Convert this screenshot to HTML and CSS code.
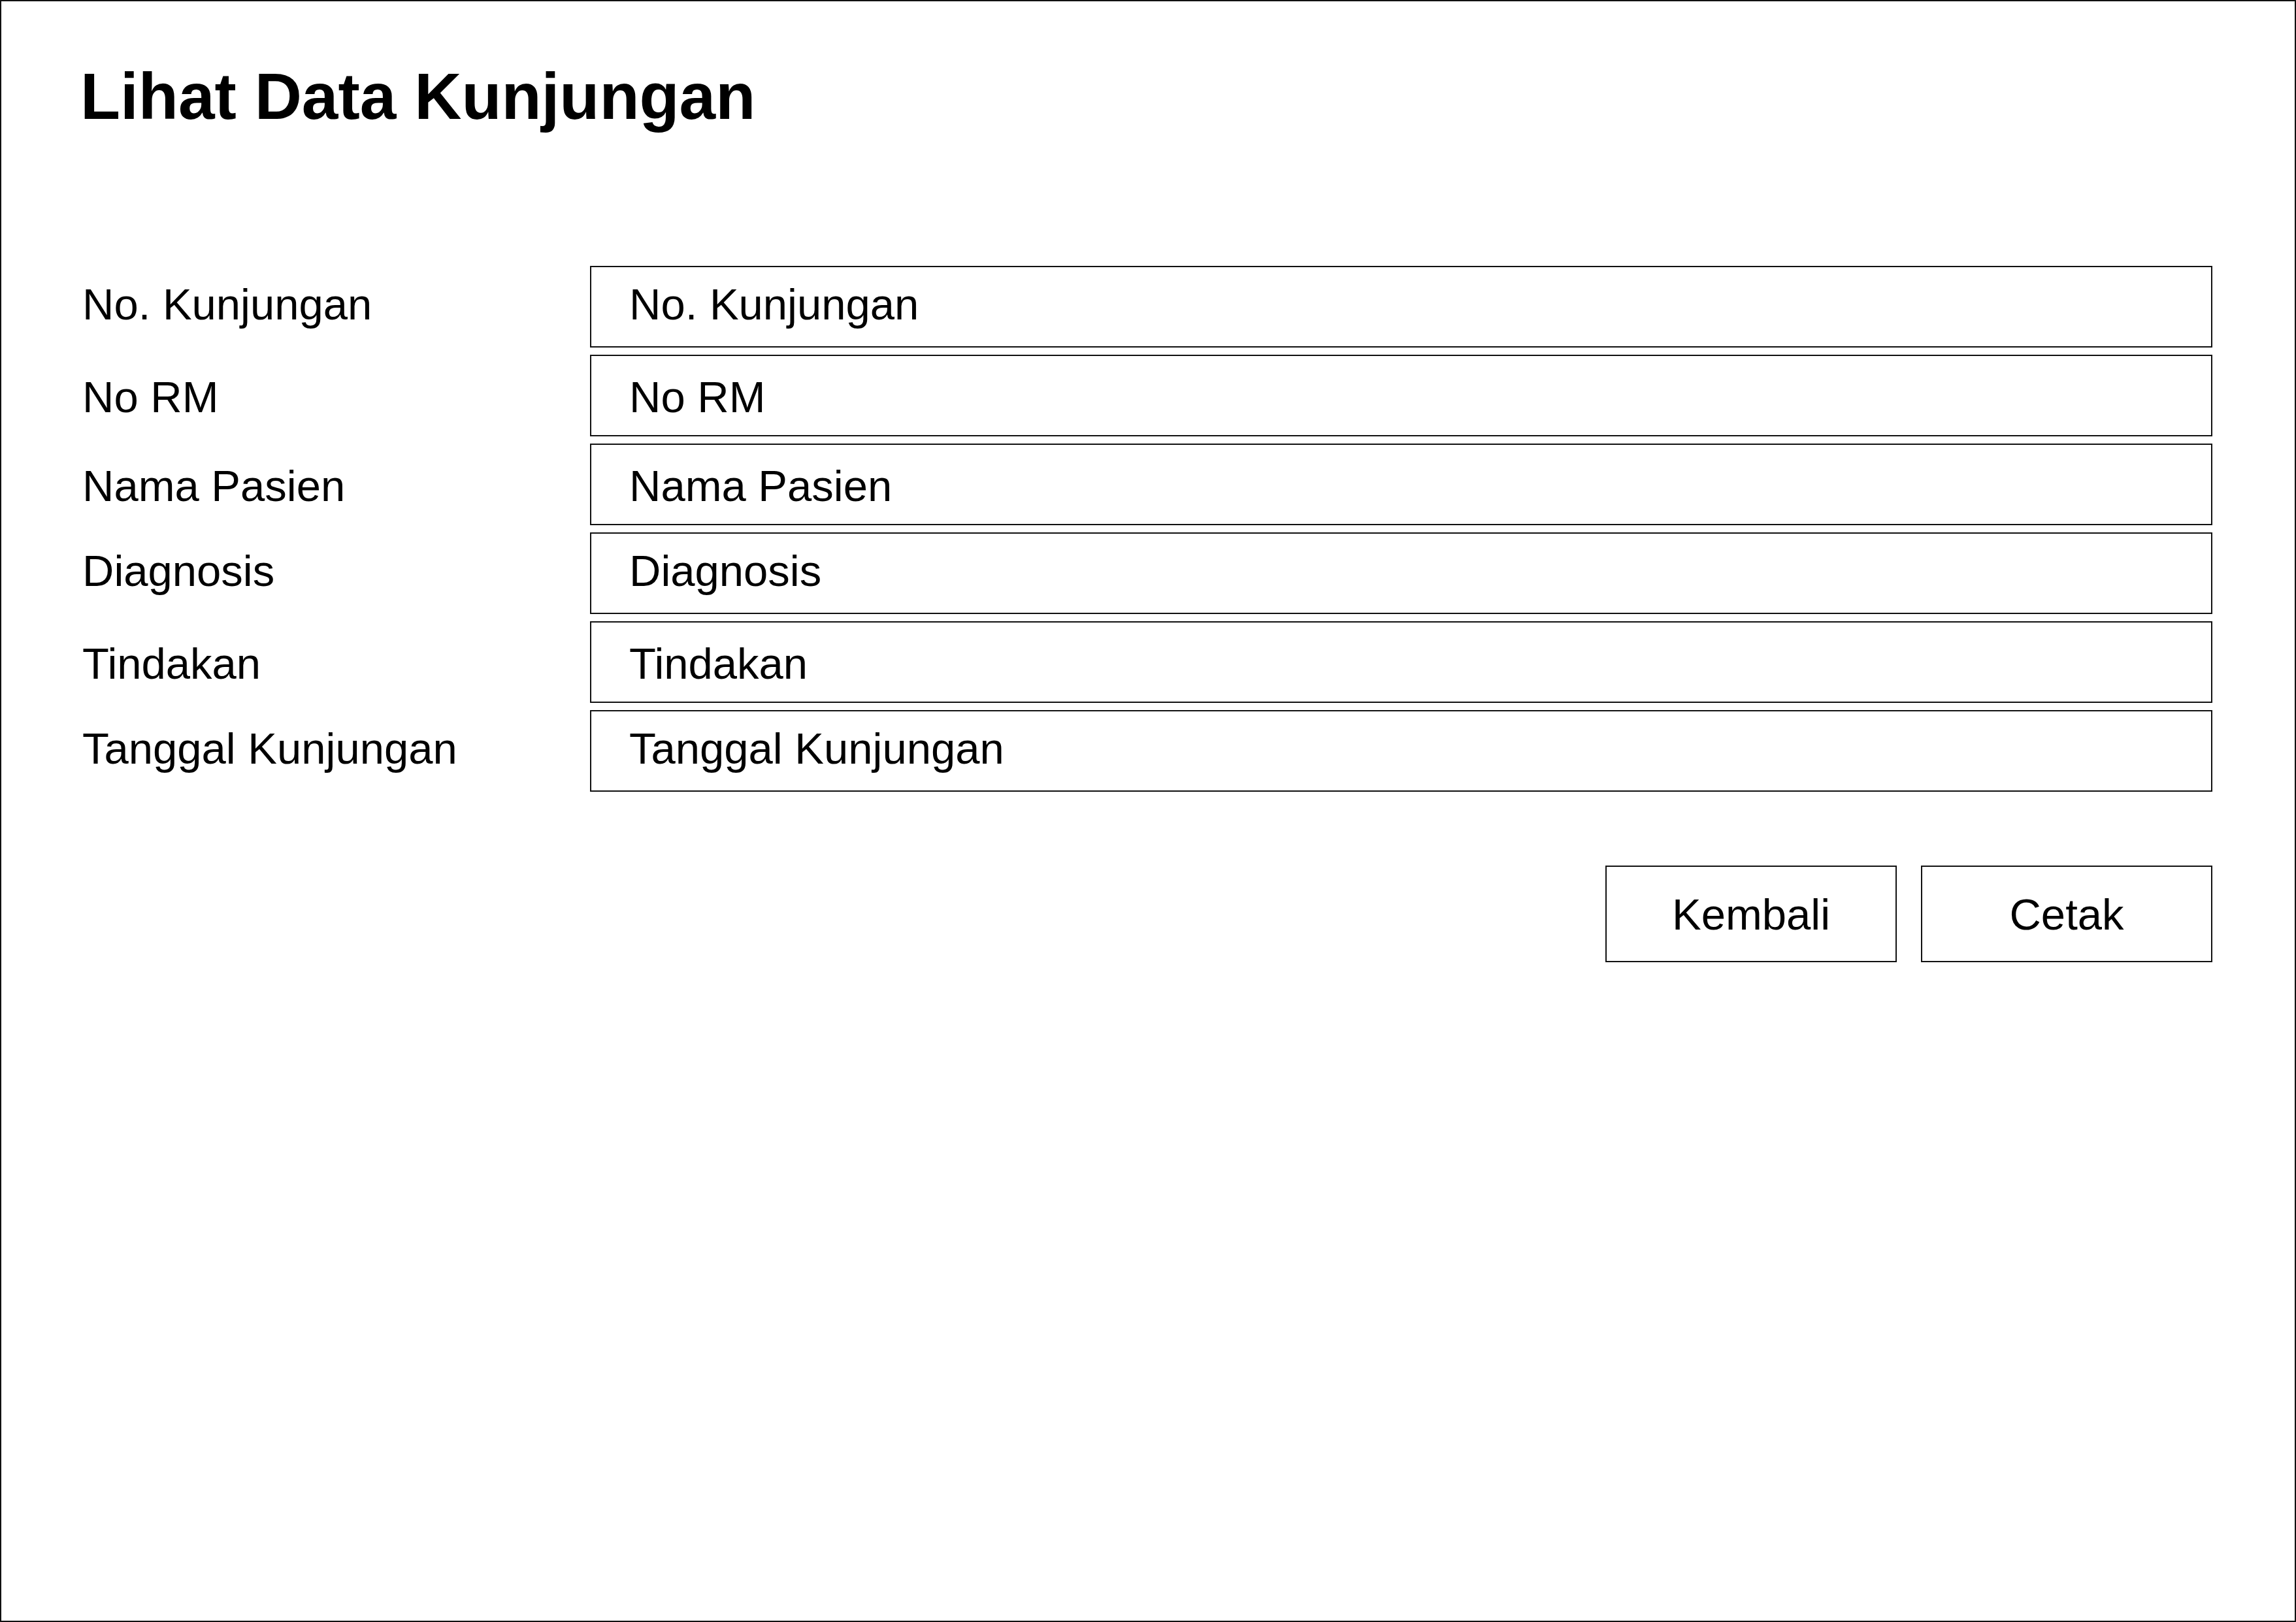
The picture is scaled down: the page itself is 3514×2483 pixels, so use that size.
FILE: index.html
```html
<!DOCTYPE html>
<html lang="id">
<head>
<meta charset="utf-8">
<title>Lihat Data Kunjungan</title>
<link rel="stylesheet" href="styles.css">
</head>
<body>
<div class="page">
  <h1 class="title">Lihat Data Kunjungan</h1>
  <div class="form">
    <div class="row raised">
      <div class="label">No. Kunjungan</div>
      <div class="field">No. Kunjungan</div>
    </div>
    <div class="row">
      <div class="label">No RM</div>
      <div class="field">No RM</div>
    </div>
    <div class="row">
      <div class="label">Nama Pasien</div>
      <div class="field">Nama Pasien</div>
    </div>
    <div class="row raised">
      <div class="label">Diagnosis</div>
      <div class="field">Diagnosis</div>
    </div>
    <div class="row">
      <div class="label">Tindakan</div>
      <div class="field">Tindakan</div>
    </div>
    <div class="row raised">
      <div class="label">Tanggal Kunjungan</div>
      <div class="field">Tanggal Kunjungan</div>
    </div>
  </div>
  <div class="actions">
    <div class="btn">Kembali</div>
    <div class="btn">Cetak</div>
  </div>
</div>
</body>
</html>
```

FILE: styles.css
```css
html, body {
  margin: 0;
  padding: 0;
  background: #ffffff;
}

body {
  font-family: "Liberation Sans", Arial, sans-serif;
  color: #000000;
}

.page {
  box-sizing: border-box;
  width: 3514px;
  height: 2483px;
  border: 2px solid #111111;
  padding: 95px 126px 0 121px;
}

.title {
  margin: 0;
  font-size: 100px;
  line-height: 100px;
  font-weight: bold;
}

.form {
  margin-top: 210px;
  display: flex;
  flex-direction: column;
  gap: 11px;
}

.row {
  display: flex;
  align-items: stretch;
  height: 125px;
}

.label {
  box-sizing: border-box;
  width: 780px;
  padding-left: 3px;
  font-size: 67px;
  line-height: 67px;
  display: flex;
  align-items: center;
  padding-top: 3px;
}

.field {
  box-sizing: border-box;
  flex: 1;
  border: 2px solid #111111;
  padding-left: 58px;
  font-size: 67px;
  line-height: 67px;
  display: flex;
  align-items: center;
  padding-top: 3px;
}

.row.raised .label,
.row.raised .field {
  padding-top: 0;
  padding-bottom: 9px;
}

.actions {
  margin-top: 113px;
  display: flex;
  justify-content: flex-end;
  gap: 37px;
}

.btn {
  box-sizing: border-box;
  width: 446px;
  height: 148px;
  border: 2px solid #111111;
  font-size: 67px;
  line-height: 67px;
  display: flex;
  align-items: center;
  justify-content: center;
}
```
